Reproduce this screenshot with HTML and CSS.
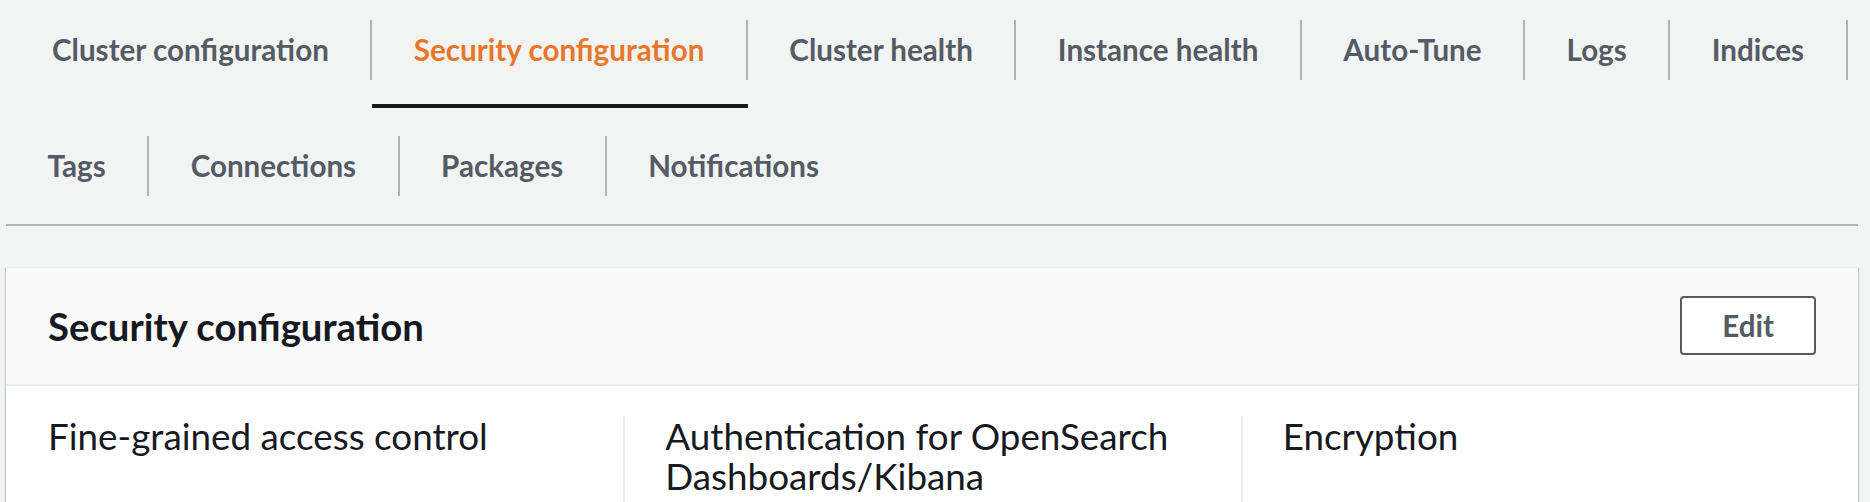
FILE: index.html
```html
<!DOCTYPE html>
<html lang="en">
<head>
<meta charset="utf-8">
<title>Security configuration</title>
<link rel="stylesheet" href="styles.css">
</head>
<body>
<div class="page">
  <ul class="tabs">
    <li class="tab tab-first"><span class="tab-label">Cluster configuration</span></li>
    <li class="tab tab-active"><span class="tab-label">Security configuration</span></li>
    <li class="tab"><span class="tab-label">Cluster health</span></li>
    <li class="tab"><span class="tab-label">Instance health</span></li>
    <li class="tab"><span class="tab-label">Auto-Tune</span></li>
    <li class="tab"><span class="tab-label">Logs</span></li>
    <li class="tab"><span class="tab-label">Indices</span></li>
    <li class="tab"><span class="tab-label">Tags</span></li>
    <li class="tab"><span class="tab-label">Connections</span></li>
    <li class="tab"><span class="tab-label">Packages</span></li>
    <li class="tab tab-last"><span class="tab-label">Notifications</span></li>
  </ul>

  <section class="card">
    <header class="card-header">
      <h2 class="card-title">Security configuration</h2>
      <button class="btn" type="button">Edit</button>
    </header>
    <div class="card-body">
      <div class="col">Fine-grained access control</div>
      <div class="col">Authentication for OpenSearch Dashboards/Kibana</div>
      <div class="col">Encryption</div>
    </div>
  </section>
</div>
</body>
</html>
```

FILE: styles.css
```css
* { box-sizing: border-box; }

html, body {
  margin: 0;
  padding: 0;
  background: #f2f3f3;
}

body {
  font-family: Lato, "Liberation Sans", sans-serif;
  color: #16191f;
}

.page {
  padding: 0 12px 0 6px;
}

.tabs {
  list-style: none;
  margin: 0;
  padding: 0;
  display: flex;
  flex-wrap: wrap;
  row-gap: 8px;
  border-bottom: 2px solid #aab7b8;
}

.tab {
  height: 108px;
  padding-top: 20px;
  border-bottom: 4px solid transparent;
}

.tab-active {
  border-bottom-color: #16191f;
}

.tab-label {
  display: block;
  height: 60px;
  line-height: 60px;
  padding: 0 41.5px;
  border-right: 2px solid #aab7b8;
  font-size: 29.6px;
  font-weight: 700;
  color: #545b64;
  white-space: nowrap;
}

.tab-first .tab-label {
  padding-left: 46px;
}

.tab-active .tab-label {
  color: #e9772a;
}

.tab-last .tab-label {
  border-right-color: transparent;
}

.card {
  margin-top: 41px;
  background: #ffffff;
  border-top: 1px solid #eaeded;
  box-shadow: 0 1px 1px 0 rgba(0, 28, 36, 0.3),
              1px 1px 1px 0 rgba(0, 28, 36, 0.15),
              -1px 1px 1px 0 rgba(0, 28, 36, 0.15);
}

.card-header {
  display: flex;
  align-items: center;
  justify-content: space-between;
  padding: 28px 42px 29px;
  background: #fafafa;
  border-bottom: 2px solid #eaeded;
}

.card-title {
  margin: 0;
  font-size: 38.3px;
  line-height: 48px;
  font-weight: 700;
  color: #16191f;
}

.btn {
  font-family: Lato, "Liberation Sans", sans-serif;
  font-size: 29.6px;
  font-weight: 700;
  color: #545b64;
  background: #ffffff;
  border: 2px solid #545b64;
  border-radius: 4px;
  height: 59px;
  padding: 0 40px;
  line-height: 55px;
}

.card-body {
  display: grid;
  grid-template-columns: 1fr 1fr 1fr;
  padding-top: 30px;
}

.col {
  min-height: 200px;
  padding: 0 42px 0 40px;
  border-left: 2px solid #eaeded;
  font-size: 36.8px;
  line-height: 40px;
  color: #16191f;
}

.col:first-child {
  border-left-color: transparent;
}
```
